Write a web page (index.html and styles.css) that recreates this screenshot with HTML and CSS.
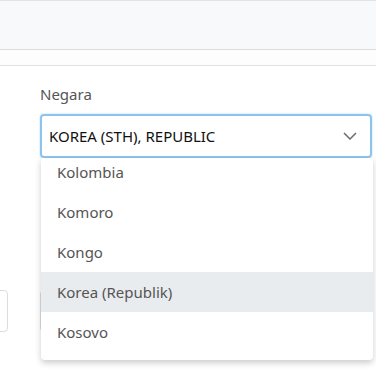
FILE: index.html
```html
<!DOCTYPE html>
<html lang="id">
<head>
  <meta charset="UTF-8">
  <meta name="viewport" content="width=device-width, initial-scale=1.0">
  <title>Negara</title>
  <link rel="stylesheet" href="styles.css">
</head>
<body>
<header class="topbar"></header>
<div class="subbar"></div>

<main class="content">
  <div class="field">
    <label class="field-label">Negara</label>
    <div class="select-box">
      <span class="select-value">KOREA (STH), REPUBLIC</span>
      <svg class="chevron" width="14" height="8" viewBox="0 0 14 8">
        <path d="M1 1 L7 7 L13 1" fill="none" stroke="#6b6b6b" stroke-width="1.5"/>
      </svg>
    </div>

    <!-- Open dropdown list -->
    <div class="dropdown">
      <ul class="options">
        <li>Kolombia</li>
        <li>Komoro</li>
        <li>Kongo</li>
        <li class="active">Korea (Republik)</li>
        <li>Kosovo</li>
      </ul>
    </div>
  </div>

  <!-- Row behind the dropdown -->
  <div class="row">
    <div class="input-stub left"></div>
    <div class="input-stub right"></div>
  </div>
</main>
</body>
</html>
```

FILE: styles.css
```css
body {
  margin: 0;
  padding: 0;
  min-height: 376px;
  font-family: "Noto Sans", "Open Sans", Arial, sans-serif;
  background-color: #fff;
  color: #333;
}

.topbar {
  height: 48px;
  background-color: #f8f9fa;
  border-top: 1px solid #e3e3e3;
  border-bottom: 1px solid #dedede;
}

.subbar {
  height: 15px;
  background-color: #fdfdfd;
  border-bottom: 1px solid #dee2e6;
}

.content {
  padding: 18px 4px 60px 40px;
}

.field {
  position: relative;
}

.field-label {
  display: block;
  font-size: 15px;
  color: #555;
  line-height: 20px;
  margin-bottom: 10px;
}

.select-box {
  display: flex;
  align-items: center;
  justify-content: space-between;
  height: 40px;
  padding: 0 13px 0 7px;
  border: 2px solid #8cc4f0;
  border-radius: 4px;
  box-shadow: 0 0 2px rgba(100, 170, 230, 0.5);
}

.select-value {
  font-size: 15px;
  color: #111;
}

.dropdown {
  position: absolute;
  top: 74px;
  left: 1px;
  right: -1px;
  height: 202px;
  overflow: hidden;
  background-color: #fff;
  border-radius: 0 0 4px 4px;
  box-shadow: 0 3px 6px rgba(0, 0, 0, 0.2);
  z-index: 2;
}

.options {
  list-style: none;
  margin: -6px 0 0;
  padding: 0;
}

.options li {
  height: 40px;
  line-height: 40px;
  padding-left: 16px;
  font-size: 15px;
  color: #555;
}

.options li.active {
  background-color: #e9ecef;
}

.row {
  display: flex;
  gap: 32px;
  margin: 132px 0 0 -52px;
}

.input-stub {
  height: 40px;
  border: 1px solid #ddd;
  border-radius: 4px;
}

.input-stub.left {
  width: 18px;
}

.input-stub.right {
  flex: 1;
}
```
